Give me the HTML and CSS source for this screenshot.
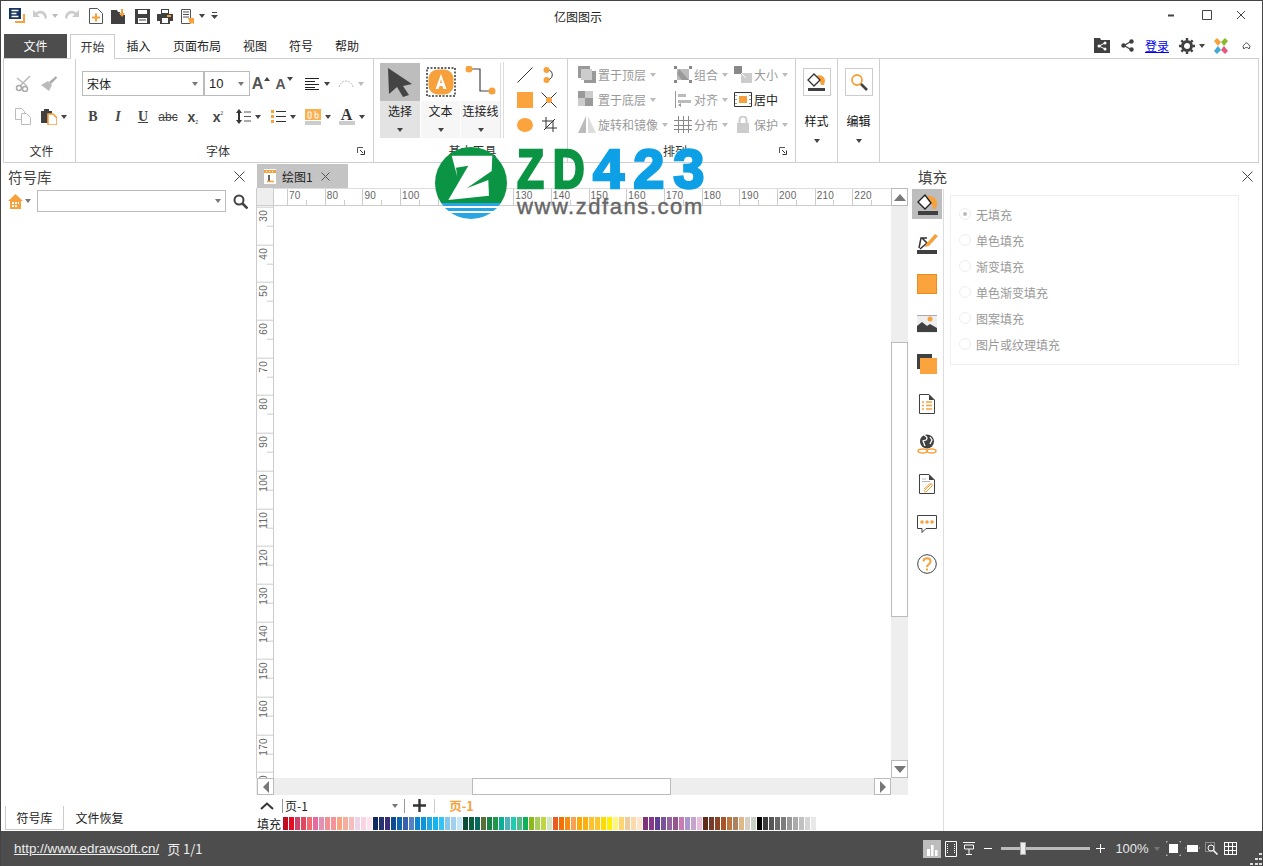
FILE: index.html
```html
<!DOCTYPE html>
<html lang="zh">
<head>
<meta charset="utf-8">
<title>亿图图示</title>
<link rel="stylesheet" href="styles.css">
</head>
<body>
<div class="app">
  <header class="titlebar">
    <div class="qat">
      <svg width="16" height="16" viewBox="0 0 16 16"><rect y="0" width="12" height="11" fill="#17365f"/><path d="M2.500 2.500h7M2.500 5.500h5M2.500 8.500h7" stroke="#fff" stroke-width="1.300"/><path d="M6 14h9V6" fill="none" stroke="#f7a13d" stroke-width="2"/></svg>
      <svg width="16" height="14" viewBox="0 0 16 14"><path d="M1 1v7h7L5.500 5.500C8 3.500 12 4.500 13 10l2-1C15 3 9-.5 4 3.500L1 1z" fill="#ccc"/></svg>
      <i class="caret dim"></i>
      <svg width="16" height="14" viewBox="0 0 16 14"><path d="M15 1v7H8l2.500-2.500C8 3.500 4 4.500 3 10L1 9C1 3 7-.5 12 3.500L15 1z" fill="#ccc"/></svg>
      <svg width="14" height="16" viewBox="0 0 14 16"><path d="M.500.500h8l5 5v10H.500z" fill="#fff" stroke="#555"/><path d="M7 5.500v8M3 9.500h8" stroke="#f7a13d" stroke-width="2"/></svg>
      <svg width="16" height="15" viewBox="0 0 16 15"><path d="M0 1h6l1 2h2v3h5v9H0z" fill="#404040"/><path d="M10 0h2v4h2l-3 4-3-4h2z" fill="#f7a13d"/></svg>
      <svg width="15" height="15" viewBox="0 0 15 15"><path d="M0 0h15v15H0z" fill="#404040"/><path d="M3 1h9v4H3zM3 9h9v5H3z" fill="#fff"/><path d="M4 11h7" stroke="#404040"/></svg>
      <svg width="16" height="15" viewBox="0 0 16 15"><path d="M4 0h8v5H4zM0 5h16v7h-3v3H3v-3H0z" fill="#404040"/><path d="M5 1h6v3H5zM5 9h6v5H5z" fill="#fff"/><path d="M10 6h4v2h-4z" fill="#f7a13d"/></svg>
      <svg width="14" height="15" viewBox="0 0 14 15"><path d="M.500.500h9v14h-9z" fill="#fff" stroke="#555"/><path d="M2 3h6M2 5.500h6M2 8h6" stroke="#555"/><path d="M7 9h6v6l-2-1-2 1z" fill="#f7a13d"/></svg>
      <i class="caret"></i>
      <svg width="7" height="8" viewBox="0 0 7 8"><path d="M1 .500h5" stroke="#444"/><path d="M0 3h7L3.500 7z" fill="#444"/></svg>
    </div>
    <h1 class="apptitle">亿图图示</h1>
    <div class="winctl">
      <svg width="8" height="3" viewBox="0 0 8 3"><path d="M1 1.500h6" stroke="#444" stroke-width="2"/></svg>
      <svg width="10" height="10" viewBox="0 0 10 10"><path d="M.500.500h9v9h-9z" fill="none" stroke="#444"/></svg>
      <svg width="10" height="10" viewBox="0 0 10 10"><path d="M1 1l8 8M9 1l-8 8" stroke="#444"/></svg>
    </div>
  </header>

  <nav class="tabbar">
    <div class="filebtn">文件</div>
    <div class="tabs">
      <span class="tab active">开始</span>
      <span class="tab t47">插入</span>
      <span class="tab t70">页面布局</span>
      <span class="tab t46">视图</span>
      <span class="tab t46">符号</span>
      <span class="tab t46">帮助</span>
    </div>
    <div class="tabtools">
      <svg width="16" height="15" viewBox="0 0 16 15"><path d="M0 0h6l1 2h9v13H0z" fill="#404040"/><path d="M11 5L5 8l6 3" fill="none" stroke="#fff"/><circle cx="5" cy="8" r="1.500" fill="#fff"/><circle cx="11" cy="5" r="1.500" fill="#fff"/><circle cx="11" cy="11" r="1.500" fill="#fff"/></svg>
      <svg width="13" height="13" viewBox="0 0 13 13"><path d="M10 2.500L3 6.500l7 4" fill="none" stroke="#404040" stroke-width="1.300"/><circle cx="10.500" cy="2.500" r="2.200" fill="#404040"/><circle cx="2.500" cy="6.500" r="2.200" fill="#404040"/><circle cx="10.500" cy="10.500" r="2.200" fill="#404040"/></svg>
      <a class="login">登录</a>
      <span class="combo"><svg width="16" height="16" viewBox="0 0 16 16"><circle cx="8" cy="8" r="4.500" fill="none" stroke="#404040" stroke-width="3"/><path d="M8 0v16M0 8h16M2.300 2.300l11.400 11.400M13.700 2.300L2.300 13.700" stroke="#404040" stroke-width="2.400" stroke-dasharray="2.500 11 2.500"/></svg><i class="caret"></i></span>
      <svg width="16" height="16" viewBox="0 0 16 16"><path d="M1 3l3-3 4 4-3 4z" fill="#f7a13d"/><path d="M15 3l-3-3-4 4 3 4z" fill="#8cb82b"/><path d="M1 13l3 3 4-4-3-4z" fill="#3fa9dc"/><path d="M15 13l-3 3-4-4 3-4z" fill="#e8557f"/></svg>
      <svg width="9" height="8" viewBox="0 0 9 8"><path d="M1 4.500C2 3 3 1 4.500 1S7 3 8 4.500L7 7C6 5 3 5 2 7z" fill="none" stroke="#444"/></svg>
    </div>
  </nav>

  <section class="ribbon">
    <div class="group g-file">
      <div class="rows">
        <div class="row r-file1">
          <svg width="17" height="17" viewBox="0 0 17 17"><path d="M15 1L5 11M2 3l10 8" stroke="#bbb" stroke-width="1.600"/><circle cx="4" cy="13" r="2.500" fill="#fff" stroke="#aaa" stroke-width="1.500"/><circle cx="10" cy="14" r="2.500" fill="#fff" stroke="#aaa" stroke-width="1.500"/></svg>
          <svg width="16" height="16" viewBox="0 0 16 16"><path d="M15 0l1 2-6 6-2-2z" fill="#aaa"/><path d="M7 5l4 4-3 6-8-6z" fill="#bbb"/></svg>
        </div>
        <div class="row r-file2">
          <svg width="17" height="17" viewBox="0 0 17 17"><path d="M.500.500h6l3 3v8h-9z" fill="#fff" stroke="#bbb"/><path d="M6.500 5.500h5l4 4v7h-9z" fill="#fff" stroke="#bbb"/></svg>
          <span class="combo"><svg width="16" height="16" viewBox="0 0 16 16"><path d="M0 2h3V0h5v2h3v3H7v9H0z" fill="#404040"/><path d="M7 5h5l4 4v7H7z" fill="#fff" stroke="#f7a13d" stroke-width="1.600"/></svg><i class="caret"></i></span>
        </div>
      </div>
      <div class="glabel">文件</div>
    </div>

    <div class="group g-font">
      <div class="rows">
        <div class="row r-font1">
          <div class="select s-font"><span>宋体</span><i class="caret grey"></i></div>
          <div class="select s-size"><span class="lat">10</span><i class="caret grey"></i></div>
          <span class="fontgrow">A<i class="caret up"></i></span>
          <span class="fontgrow small">A<i class="caret"></i></span>
          <span class="combo"><svg width="15" height="12" viewBox="0 0 15 12"><path d="M0 .500h14M0 3.500h10M0 6.500h14M0 9.500h10M0 11.500h14" stroke="#222"/></svg><i class="caret"></i></span>
          <span class="combo"><svg width="16" height="11" viewBox="0 0 16 11"><path d="M1 9C3 1 13 1 15 9" fill="none" stroke="#bbb" stroke-dasharray="2 1"/></svg><i class="caret dim"></i></span>
        </div>
        <div class="row r-font2">
          <b class="fmt serif">B</b>
          <i class="fmt serif ital">I</i>
          <u class="fmt serif">U</u>
          <s class="fmt abc">abc</s>
          <span class="fmt xs">x<sub>₂</sub></span>
          <span class="fmt xs">x<sub class="up2">²</sub></span>
          <span class="combo"><svg width="15" height="15" viewBox="0 0 15 15"><path d="M3 0l3 4H4v7h2l-3 4-3-4h2V4H0z" fill="#333"/><path d="M8 3h7M8 7.500h7M8 12h7" stroke="#555"/></svg><i class="caret"></i></span>
          <span class="combo"><svg width="15" height="13" viewBox="0 0 15 13"><path d="M0 0h3v3H0zM0 5h3v3H0zM0 10h3v3H0z" fill="#f7a13d"/><path d="M5 1.500h10M5 6.500h10M5 11.500h10" stroke="#333"/></svg><i class="caret"></i></span>
          <span class="combo"><svg width="16" height="16" viewBox="0 0 16 16"><path d="M0 0h16v11H0z" fill="#fbb04f"/><path d="M0 12h16v4H0z" fill="#ccc"/><path d="M3 3h3v6H3zM10 2v7h3V5h-3" fill="none" stroke="#fff"/></svg><i class="caret"></i></span>
          <span class="combo"><span class="fontcolor">A</span><i class="caret"></i></span>
        </div>
      </div>
      <div class="glabel launch">
        <span></span><span>字体</span>
        <svg class="launcher" width="8" height="8" viewBox="0 0 8 8"><path d="M.500 6V.500H6" fill="none" stroke="#555"/><path d="M3 3l3 3M7.500 3.500v4h-4" fill="none" stroke="#333"/></svg>
      </div>
    </div>

    <div class="group g-tools">
      <div class="toolsrow">
        <div class="bigs">
          <div class="big on">
            <div class="bigicon"><svg width="26" height="30" viewBox="0 0 26 30"><path d="M1 1l24 16-9 2 6 9-6 2-6-10-8 7z" fill="#444"/></svg></div>
            <div class="bigfoot">选择<i class="caret"></i></div>
          </div>
          <div class="big">
            <div class="bigicon"><svg width="30" height="30" viewBox="0 0 30 30"><rect x="1" y="1" width="28" height="28" fill="#fff" stroke="#333" stroke-width="1.500" stroke-dasharray="2 1.500"/><rect x="2.500" y="2.500" width="25" height="25" rx="9" fill="#f7a13d"/><path d="M15 7l-5.500 15h3l1-3h3l1 3h3z M15 12l1 4h-2z" fill="#fff" fill-rule="evenodd"/></svg></div>
            <div class="bigfoot">文本<i class="caret"></i></div>
          </div>
          <div class="big">
            <div class="bigicon"><svg width="32" height="32" viewBox="0 0 32 32"><path d="M4 3h11v22h12" fill="none" stroke="#444" stroke-width="1.200"/><circle cx="4" cy="3" r="3.500" fill="#f7a13d"/><circle cx="27" cy="25" r="3.500" fill="#f7a13d"/></svg></div>
            <div class="bigfoot">连接线<i class="caret"></i></div>
          </div>
        </div>
        <div class="shapes">
          <svg width="16" height="16" viewBox="0 0 16 16"><path d="M.500 15.500l15-15" stroke="#333"/></svg>
          <svg width="12" height="16" viewBox="0 0 12 16"><path d="M4 3c6-1 8 9 0 10" fill="none" stroke="#333"/><circle cx="3.500" cy="3" r="3" fill="#f7a13d"/><circle cx="3.500" cy="13" r="3" fill="#f7a13d"/></svg>
          <svg width="16" height="16" viewBox="0 0 16 16"><rect width="16" height="16" fill="#fba33d"/></svg>
          <svg width="16" height="16" viewBox="0 0 16 16"><path d="M.500.500l15 15M15.500.500l-15 15" stroke="#333"/><circle cx="8" cy="8" r="3" fill="#f7a13d"/></svg>
          <svg width="16" height="16" viewBox="0 0 16 16"><ellipse cx="8" cy="8" rx="8" ry="7" fill="#fba33d"/></svg>
          <svg width="15" height="15" viewBox="0 0 15 15"><path d="M4 0v11h11M0 4h11v11M2 13L13 2" fill="none" stroke="#333"/></svg>
        </div>
      </div>
      <div class="glabel">基本工具</div>
    </div>

    <div class="group g-arr">
      <div class="arrange">
        <div class="ai"><svg width="18" height="17" viewBox="0 0 18 17"><path d="M0 0h12v12H0z" fill="#999"/><path d="M6 5h12v12H6z" fill="#999"/><path d="M3 3h11v11H3z" fill="#ccc"/></svg><span>置于顶层</span><i class="caret dim"></i></div>
        <div class="ai"><svg width="18" height="17" viewBox="0 0 18 17"><path d="M3 3h12v11H3z" fill="#bbb"/><path d="M0 0h3v3H0zM15 0h3v3h-3zM0 14h3v3H0zM15 14h3v3h-3z" fill="#888"/><path d="M5 3l10 11H8L3 8z" fill="#999"/></svg><span>组合</span><i class="caret dim"></i></div>
        <div class="ai"><svg width="18" height="17" viewBox="0 0 18 17"><path d="M0 0h8v8H0z" fill="#888"/><path d="M7 7h11v10H7z" fill="#ccc"/><path d="M7 7l5 5" stroke="#fff"/></svg><span>大小</span><i class="caret dim"></i></div>
        <div class="ai"><svg width="18" height="17" viewBox="0 0 18 17"><path d="M0 0h7v7H0zM7 7h8v8H7z" fill="#999"/><path d="M7 0h8v7H7zM0 7h7v8H0z" fill="#ccc"/></svg><span>置于底层</span><i class="caret dim"></i></div>
        <div class="ai"><svg width="18" height="17" viewBox="0 0 18 17"><path d="M1.500 0v17" stroke="#999"/><path d="M4 3h8v3H4zM4 9h13v3H4z" fill="#bbb"/><path d="M4 14l3-2v4z" fill="#999"/></svg><span>对齐</span><i class="caret dim"></i></div>
        <div class="ai on"><svg width="18" height="15" viewBox="0 0 18 15"><path d="M.500.500h17v14H.500z" fill="#fff" stroke="#333"/><path d="M5 4h8v7H5z" fill="#f7a13d"/><path d="M2 3v1M2 7v1M2 11v1M16 3v1M16 7v1M16 11v1" stroke="#333"/></svg><span>居中</span></div>
        <div class="ai"><svg width="18" height="17" viewBox="0 0 18 17"><path d="M8 0v17L0 17z" fill="#bbb"/><path d="M10 0v17h8z" fill="#ddd"/></svg><span>旋转和镜像</span><i class="caret dim"></i></div>
        <div class="ai"><svg width="18" height="17" viewBox="0 0 18 17"><path d="M4.500 0v17M9.500 0v17M14.500 0v17M0 4.500h18M0 9.500h18M0 13.500h18" stroke="#888"/></svg><span>分布</span><i class="caret dim"></i></div>
        <div class="ai"><svg width="18" height="17" viewBox="0 0 18 17"><path d="M5.500 7V4a3.500 3.500 0 017 0v3" fill="none" stroke="#ccc" stroke-width="2"/><path d="M3 7h12v10H3z" fill="#ccc"/></svg><span>保护</span><i class="caret dim"></i></div>
      </div>
      <div class="glabel launch">
        <span></span><span>排列</span>
        <svg class="launcher" width="8" height="8" viewBox="0 0 8 8"><path d="M.500 6V.500H6" fill="none" stroke="#555"/><path d="M3 3l3 3M7.500 3.500v4h-4" fill="none" stroke="#333"/></svg>
      </div>
    </div>

    <div class="group g-one">
      <div class="onebox"><svg width="19" height="18" viewBox="0 0 19 18"><path d="M9 3c4-2 9 0 9 5l-1 4h-3l-1-3z" fill="#f7a13d"/><path d="M7 1L1 7l6 6 6-6z" fill="#fff" stroke="#333" stroke-width="1.300"/><path d="M1 15h17v3H1z" fill="#404040"/></svg></div>
      <div class="onetext">样式</div>
      <i class="caret"></i>
    </div>
    <div class="group g-one">
      <div class="onebox"><svg width="18" height="18" viewBox="0 0 18 18"><circle cx="7" cy="7" r="5" fill="none" stroke="#f7a13d" stroke-width="1.800"/><path d="M11 11l6 6" stroke="#444" stroke-width="2.600"/></svg></div>
      <div class="onetext">编辑</div>
      <i class="caret"></i>
    </div>
  </section>

  <main class="main">
    <aside class="leftpanel">
      <div class="phead"><span>符号库</span><svg width="11" height="11" viewBox="0 0 11 11"><path d="M.500.500l10 10M10.500.500l-10 10" stroke="#444"/></svg></div>
      <div class="search">
        <svg width="15" height="15" viewBox="0 0 15 15"><path d="M7.500 0L15 7h-2v8H2V7H0z" fill="#f7a13d"/><path d="M4 8h2v2H4zM7 8h2v2H7zM10 8h1v2h-1zM4 11h2v2H4zM7 11h2v2H7z" fill="#fff"/></svg>
        <i class="caret grey"></i>
        <div class="searchbox"><i class="caret grey"></i></div>
        <svg width="15" height="15" viewBox="0 0 15 15"><circle cx="6" cy="6" r="4.500" fill="none" stroke="#444" stroke-width="2"/><path d="M9.500 9.500l5 5" stroke="#444" stroke-width="2.600"/></svg>
      </div>
      <div class="lefttabs">
        <span class="ltab active">符号库</span>
        <span class="ltab">文件恢复</span>
      </div>
    </aside>

    <section class="center">
      <div class="doctabs">
        <div class="doctab">
          <svg width="12" height="15" viewBox="0 0 12 15"><path d="M0 0h12v15H0z" fill="#fff"/><path d="M0 1h12v3H0z" fill="#f7a13d"/><path d="M2 2.500h1M5 2.500h1M8 2.500h1" stroke="#fff"/><path d="M5 6v6" stroke="#333" stroke-width="1.500"/><path d="M3 12.500h7" stroke="#f7a13d" stroke-width="1.500"/></svg>
          <span>绘图1</span>
          <svg width="9" height="9" viewBox="0 0 9 9"><path d="M.500.500l8 8M8.500.500l-8 8" stroke="#555"/></svg>
        </div>
      </div>
      <div class="canvasgrid">
        <div class="corner"></div>
        <div class="hruler">
          <span>70</span><span>80</span><span>90</span><span>100</span><span>110</span><span>120</span><span>130</span><span>140</span><span>150</span><span>160</span><span>170</span><span>180</span><span>190</span><span>200</span><span>210</span><span>220</span>
        </div>
        <div class="vscroll">
          <div class="sbtn"><i class="caret up big7"></i></div>
          <div class="vthumb"></div>
          <div class="sbtn end"><i class="caret big7d"></i></div>
        </div>
        <div class="vruler">
          <span>30</span><span>40</span><span>50</span><span>60</span><span>70</span><span>80</span><span>90</span><span>100</span><span>110</span><span>120</span><span>130</span><span>140</span><span>150</span><span>160</span><span>170</span><span>180</span>
        </div>
        <div class="paper"></div>
        <div class="hscroll">
          <div class="sbtn"><i class="tri-l"></i></div>
          <div class="hthumb"></div>
          <div class="sbtn end"><i class="tri-r"></i></div>
        </div>
      </div>
      <div class="pagebar">
        <svg class="chev" width="14" height="8" viewBox="0 0 14 8"><path d="M1 7l6-5.500L13 7" fill="none" stroke="#333" stroke-width="2"/></svg>
        <div class="pagesel"><span>页-1</span><i class="caret grey"></i></div>
        <svg width="13" height="13" viewBox="0 0 13 13"><path d="M6.500 0v13M0 6.500h13" stroke="#333" stroke-width="2.400"/></svg>
        <div class="pagetab">页-1</div>
      </div>
      <div class="swatchrow">
        <span class="fillname">填充</span>
        <div class="swatches">
          <i style="background:#c00d23"></i><i style="background:#e60c26"></i><i style="background:#c8466b"></i><i style="background:#e0485f"></i><i style="background:#f36a6f"></i><i style="background:#e76a9e"></i><i style="background:#e290b4"></i><i style="background:#f48d8f"></i><i style="background:#f5939c"></i><i style="background:#fba27f"></i><i style="background:#f5ae9e"></i><i style="background:#f6bdb9"></i><i style="background:#ecd5e8"></i><i style="background:#fad2e0"></i><i style="background:#fde4ec"></i>
          <i style="background:#0e2a5e"></i><i style="background:#26326f"></i><i style="background:#3a2e7b"></i><i style="background:#0d4c92"></i><i style="background:#0e66ab"></i><i style="background:#3a60ab"></i><i style="background:#5482c2"></i><i style="background:#0c85d0"></i><i style="background:#0e94d8"></i><i style="background:#22a8e0"></i><i style="background:#12b5ee"></i><i style="background:#35c2f6"></i><i style="background:#88c6ec"></i><i style="background:#9fd0ef"></i><i style="background:#c5e6f6"></i>
          <i style="background:#094d35"></i><i style="background:#0a5f3e"></i><i style="background:#056b60"></i><i style="background:#596f34"></i><i style="background:#158348"></i><i style="background:#23964a"></i><i style="background:#0bae96"></i><i style="background:#4fb2b7"></i><i style="background:#20cbb2"></i><i style="background:#4fbd87"></i><i style="background:#0db15c"></i><i style="background:#8bb81a"></i><i style="background:#a8cf5c"></i><i style="background:#bfd640"></i><i style="background:#d0e3c4"></i>
          <i style="background:#ec5a22"></i><i style="background:#f37004"></i><i style="background:#f58b12"></i><i style="background:#f9a152"></i><i style="background:#fbab09"></i><i style="background:#fcb010"></i><i style="background:#fdc02f"></i><i style="background:#fdc62e"></i><i style="background:#ffda00"></i><i style="background:#ffef00"></i><i style="background:#fff57e"></i><i style="background:#ffd56e"></i><i style="background:#eecb9a"></i><i style="background:#fdd9aa"></i><i style="background:#fde6cb"></i>
          <i style="background:#7e3277"></i><i style="background:#84398a"></i><i style="background:#5f3f96"></i><i style="background:#7a539b"></i><i style="background:#96639f"></i><i style="background:#95558f"></i><i style="background:#c97bb2"></i><i style="background:#ab97cf"></i><i style="background:#c5a3cc"></i><i style="background:#ecbcdc"></i>
          <i style="background:#5f2c18"></i><i style="background:#743b2a"></i><i style="background:#8a4427"></i><i style="background:#a9552a"></i><i style="background:#bd7740"></i><i style="background:#ad8260"></i><i style="background:#deb887"></i><i style="background:#d6cfc6"></i><i style="background:#c8d1c6"></i>
          <i style="background:#000"></i><i style="background:#3b3b3b"></i><i style="background:#555"></i><i style="background:#696969"></i><i style="background:#7c7c7c"></i><i style="background:#999"></i><i style="background:#aaa"></i><i style="background:#c0c0c0"></i><i style="background:#d5d5d5"></i><i style="background:#e8e8e8"></i>
        </div>
      </div>
    </section>

    <aside class="rightpanel">
      <div class="phead rhead"><span>填充</span><svg width="11" height="11" viewBox="0 0 11 11"><path d="M.500.500l10 10M10.500.500l-10 10" stroke="#444"/></svg></div>
      <div class="rightbody">
        <div class="iconcol">
          <div class="sideicon on"><svg width="22" height="22" viewBox="0 0 22 22"><path d="M11 3c5-1 11 3 10 8l-1 5h-3l-1-4z" fill="#f7a13d"/><path d="M9 2L2 9l7 7 6-6z" fill="#fff" stroke="#222" stroke-width="1.400"/><path d="M2 18h20v4H2z" fill="#404040"/></svg></div>
          <div class="sideicon"><svg width="22" height="22" viewBox="0 0 22 22"><path d="M3 15L5 5h6L6 5l5 5-7 6" fill="none" stroke="#333" stroke-width="1.500"/><path d="M19 1l3 2-9 10-4 1 1-3z" fill="#f7a13d"/><path d="M1 17h20v4H1z" fill="#404040"/></svg></div>
          <div class="sideicon"><svg width="20" height="20" viewBox="0 0 20 20"><rect x=".5" y=".5" width="19" height="19" fill="#fba33d" stroke="#f08a1a"/></svg></div>
          <div class="sideicon"><svg width="20" height="18" viewBox="0 0 20 18"><path d="M0 0h20v18H0z" fill="#eee"/><path d="M0 0h20v1H0z" fill="#aaa"/><circle cx="13" cy="4" r="2.500" fill="#f7a13d"/><path d="M0 11l5-4 5 4 3-2 7 4v4H0z" fill="#404040"/></svg></div>
          <div class="sideicon"><svg width="20" height="20" viewBox="0 0 20 20"><path d="M0 0h15v15H0z" fill="#404040"/><path d="M3 4h17v16H3z" fill="#fba33d"/></svg></div>
          <div class="sideicon"><svg width="16" height="20" viewBox="0 0 16 20"><path d="M.500.500H10L15.500 6v13.500H.500z" fill="#fff" stroke="#404040"/><path d="M10 .500L15.500 6H10z" fill="#404040"/><path d="M3 8h2M3 11.500h2M3 15h2M7 8h6M7 11.500h6M7 15h6" stroke="#f7a13d" stroke-width="1.500"/></svg></div>
          <div class="sideicon"><svg width="20" height="20" viewBox="0 0 20 20"><circle cx="10" cy="7.500" r="7" fill="#404040"/><path d="M7 1c3 2 4 3 2 5L6 7l2 5M13 3l2 3-2 4" fill="none" stroke="#fff" stroke-width="1.300"/><ellipse cx="5.500" cy="17" rx="4.500" ry="2" fill="none" stroke="#f7a13d" stroke-width="1.500"/><ellipse cx="14.500" cy="17" rx="4.500" ry="2" fill="none" stroke="#f7a13d" stroke-width="1.500"/></svg></div>
          <div class="sideicon"><svg width="16" height="20" viewBox="0 0 16 20"><path d="M.500.500H10L15.500 6v13.500H.500z" fill="#fff" stroke="#404040"/><path d="M10 .500L15.500 6H10z" fill="#404040"/><path d="M3 5h4M3 7.500h8" stroke="#bbb"/><path d="M12 10l-6 6c-2 1 0 3 1.500 1.500L13 12c1-2-1-3-2.500-2L5 15" fill="none" stroke="#f7a13d"/></svg></div>
          <div class="sideicon"><svg width="20" height="19" viewBox="0 0 20 19"><path d="M.500.500h19v13H9l-4 4v-4H.500z" fill="#fff" stroke="#404040"/><circle cx="5" cy="7" r="1.800" fill="#f7a13d"/><circle cx="10" cy="7" r="1.800" fill="#f7a13d"/><circle cx="15" cy="7" r="1.800" fill="#f7a13d"/></svg></div>
          <div class="sideicon"><svg width="20" height="20" viewBox="0 0 20 20"><circle cx="10" cy="10" r="9.300" fill="#fff" stroke="#404040"/><path d="M6.500 7.500c0-4.500 7-4.500 7 0 0 3-3.500 3-3.500 5.500" fill="none" stroke="#f7a13d" stroke-width="2"/><path d="M9 14.500h2v2H9z" fill="#f7a13d"/></svg></div>
        </div>
        <div class="fillbox">
          <label class="fillopt"><i class="radio on"></i>无填充</label>
          <label class="fillopt"><i class="radio"></i>单色填充</label>
          <label class="fillopt"><i class="radio"></i>渐变填充</label>
          <label class="fillopt"><i class="radio"></i>单色渐变填充</label>
          <label class="fillopt"><i class="radio"></i>图案填充</label>
          <label class="fillopt"><i class="radio"></i>图片或纹理填充</label>
        </div>
      </div>
    </aside>
  </main>

  <footer class="status">
    <a class="stlink">http://www.edrawsoft.cn/</a>
    <span class="stpage">页 1/1</span>
    <div class="sttools">
      <span class="stactive"><svg width="12" height="14" viewBox="0 0 12 14"><path d="M1 7h3v7H1zM5 3h2.500v11H5zM9 8h2.500v6H9z" fill="#fff"/></svg></span>
      <svg width="12" height="16" viewBox="0 0 12 16"><path d="M.500.500h11v15H.500z" fill="none" stroke="#fff"/><path d="M2.500 3v10M9.500 3v10" stroke="#fff" stroke-dasharray="1 1"/></svg>
      <svg width="12" height="13" viewBox="0 0 12 13"><path d="M0 .500h12M1.500 3h9v4h-9zM6 7v5M3 12.500h6" fill="none" stroke="#fff"/></svg>
      <svg width="8" height="1" viewBox="0 0 8 1"><path d="M0 .5h8" stroke="#fff"/></svg>
      <div class="slider"><i></i></div>
      <svg width="9" height="9" viewBox="0 0 9 9"><path d="M4.500 0v9M0 4.500h9" stroke="#fff"/></svg>
      <span class="zoomval">100%</span>
      <i class="caret dim2"></i>
      <svg width="15" height="15" viewBox="0 0 15 15"><path d="M3 3h9v9H3z" fill="#fff"/><path d="M0 0h2M13 0h2M0 15h2M13 15h2M0 0v2M15 0v2M0 13v2M15 13v2" stroke="#ccc"/></svg>
      <svg width="15" height="9" viewBox="0 0 15 9"><path d="M2 1h11v7H2z" fill="#fff"/><path d="M0 4h1M14 4h1" stroke="#ccc"/></svg>
      <svg width="13" height="13" viewBox="0 0 13 13"><path d="M.500.500h9v9h-9z" fill="none" stroke="#ccc" stroke-dasharray="1 1"/><circle cx="6" cy="6" r="3" fill="none" stroke="#fff"/><path d="M8.500 8.500l4 4" stroke="#fff" stroke-width="1.500"/></svg>
      <svg width="13" height="13" viewBox="0 0 13 13"><path d="M.500 0v13M4.500 0v13M8.500 0v13M12.500 0v13M0 .500h13M0 4.500h13M0 8.500h13M0 12.500h13" stroke="#fff"/></svg>
      <svg class="grip" width="12" height="12" viewBox="0 0 12 12"><path d="M9 0h3v2H9zM5 5h3v2H5zM9 5h3v2H9zM0 10h3v2H0zM5 10h3v2H5zM9 10h3v2H9z" fill="#ddd"/></svg>
    </div>
  </footer>

  <div class="watermark">
    <svg width="72" height="72" viewBox="0 0 72 72">
      <defs><clipPath id="disc"><circle cx="36" cy="36" r="36"/></clipPath></defs>
      <g clip-path="url(#disc)">
        <rect width="72" height="56" fill="#0b9444"/>
        <rect y="56" width="72" height="16" fill="#fff"/>
        <path d="M0 56h72v3H0zM0 61h72v3H0zM0 66h72v6H0z" fill="#29a5e3"/>
        <path d="M16.700 8.700L57.300 8.700 56.700 24 31.700 41.300 53.300 33 54 48.700 13.300 53 33.300 18.700 21 20.700 22.300 29.700z" fill="#fff"/>
      </g>
    </svg>
    <div class="wmtext">
      <div class="wmbig"><span class="g">ZD</span><span class="b">423</span></div>
      <div class="wmurl">www.zdfans.com</div>
    </div>
  </div>
</div>
</body>
</html>
```

FILE: styles.css
```css
* { box-sizing: border-box; }
html, body { margin: 0; padding: 0; }
body {
  font-family: "Noto Sans CJK SC", "Liberation Sans", sans-serif;
  font-size: 12px;
  color: #333;
  background: #fff;
  overflow: hidden;
}
i { font-style: normal; }

.app {
  position: relative;
  width: 1263px;
  height: 866px;
  display: flex;
  flex-direction: column;
  border: 1px solid #444;
  border-bottom: 0;
  overflow: hidden;
}

/* carets */
.caret {
  display: block;
  width: 0; height: 0;
  border-left: 3.5px solid transparent;
  border-right: 3.5px solid transparent;
  border-top: 4px solid #444;
}
.caret.up { border-top: 0; border-bottom: 4px solid #444; }
.caret.big7 { border-left-width: 6px; border-right-width: 6px; border-bottom: 7px solid #777; }
.caret.big7d { border-left-width: 6px; border-right-width: 6px; border-top: 7px solid #777; }
.caret.dim { border-top-color: #bbb; }
.caret.dim2 { border-top-color: #777; }
.caret.grey { border-top-color: #777; }
.combo { display: flex; align-items: center; gap: 4px; }

/* title bar */
.titlebar { height: 32px; flex: none; display: flex; align-items: center; position: relative; }
.qat {
  display: grid;
  grid-template-columns: 20px 26px 4px 30px 18px 28px 18px 28px 18px 10px 14px;
  justify-items: center;
  align-items: center;
  padding: 0 0 2px 6px;
  width: 553px;
}
.apptitle { margin: 0; font-size: 12px; font-weight: 400; width: 48px; color: #222; line-height: 32px; white-space: nowrap; }
.winctl {
  margin-left: auto;
  display: grid;
  grid-template-columns: 35px 38px 30px;
  justify-items: center;
  align-items: center;
  padding: 0 6px 4px 0;
}

/* tabs */
.tabbar { height: 25px; flex: none; display: flex; padding-right: 2px; position: relative; z-index: 1; }
.filebtn {
  width: 63px; height: 24px; margin: 1px 0 0 3px;
  background: #4d4d4d; color: #fff;
  text-align: center; line-height: 24px;
}
.tabs { display: flex; margin-left: 3px; padding-top: 1px; }
.tab { width: 46px; text-align: center; line-height: 24px; color: #222; }
.tab.t47 { width: 47px; }
.tab.t70 { width: 70px; }
.tab.active { width: 45px; height: 25px; border: 1px solid #ccc; border-bottom: 0; background: #fff; color: #333; line-height: 23px; }
.tabtools {
  margin-left: auto;
  display: grid;
  grid-template-columns: 24px 26px 34px 36px 22px 28px;
  justify-items: center;
  align-items: center;
}
.login { color: #0000ee; text-decoration: underline; }

/* ribbon */
.ribbon {
  height: 105px; flex: none;
  margin: 0 3px 0 2px;
  display: flex;
  border: 1px solid #d0d0d0;
}
.group { display: flex; flex-direction: column; border-right: 1px solid #d0d0d0; flex: none; }
.g-file { width: 72px; }
.g-font { width: 298px; }
.g-tools { width: 194px; }
.g-arr { width: 228px; }
.g-one { width: 42px; align-items: center; padding-top: 9px; }
.rows { padding-top: 8px; }
.row { height: 33px; display: grid; justify-items: center; align-items: center; }
.r-file1 { grid-template-columns: 38px 14px; }
.r-file2 { grid-template-columns: 38px 24px; }
.r-font1 { grid-template-columns: 122px 46px 22px 24px 43px 23px; padding-left: 6px; }
.r-font2 { grid-template-columns: 24px 26px 24px 26px 24px 26px 35px 35px 34px 33px; padding-left: 5px; }
.glabel { margin-top: auto; height: 22px; text-align: center; line-height: 22px; color: #333; padding-left: 4px; }
.glabel.launch { display: grid; grid-template-columns: 1fr auto 1fr; padding: 0 13px 0 0; align-items: center; }
.launcher { justify-self: end; margin-right: -5px; }

.select {
  width: 100%; height: 25px;
  border: 1px solid #bbb;
  display: flex; align-items: center; justify-content: space-between;
  padding: 0 5px 0 4px;
  color: #222;
}
.s-font { width: 122px; }
.s-size { width: 46px; }
.lat { font-family: "Liberation Sans", sans-serif; font-size: 13px; }
.fontgrow {
  font: 700 16px "Liberation Sans", sans-serif;
  color: #555;
  display: flex; align-items: flex-start; gap: 1px;
  line-height: 16px;
}
.fontgrow.small { font-size: 14px; }
.fontgrow .caret { margin-top: 1px; }
.fmt { color: #444; line-height: 16px; text-align: center; }
.serif { font: 700 14px "Liberation Serif", serif; }
.ital { font-style: italic; }
.abc { font: 12px "Liberation Sans", sans-serif; }
.xs { font: 700 14px "Liberation Sans", sans-serif; }
.xs sub { font-size: 8px; vertical-align: -1px; font-weight: 400; }
.xs sub.up2 { vertical-align: 5px; }
.fontcolor {
  font: 700 16px "Liberation Serif", serif;
  color: #333; width: 16px; height: 17px;
  text-align: center; line-height: 13px;
  border-bottom: 4px solid #ccc;
}

.toolsrow { display: flex; padding: 3px 0 0 6px; }
.bigs { display: flex; gap: 1px; height: 75px; margin-top: 1px; border-right: 1px solid #ddd; }
.big { width: 39px; display: flex; flex-direction: column; align-items: center; background: #fff; }
.big:first-child { width: 40px; }
.bigicon { height: 38px; width: 100%; display: flex; align-items: center; justify-content: center; }
.bigfoot {
  flex: 1; width: 100%;
  background: #f6f6f6;
  display: flex; flex-direction: column; align-items: center;
  padding-top: 1px; gap: 9px;
  line-height: 17px; color: #222;
}
.big.on .bigicon { background: #bdbdbd; }
.big.on .bigfoot { background: #e3e3e3; }
.shapes {
  display: grid;
  grid-template-columns: 24px 24px;
  grid-auto-rows: 25px;
  justify-items: center; align-items: center;
  margin-left: 2px;
  padding-left: 9px;
  border-left: 1px solid #ddd;
}
.arrange {
  display: grid;
  grid-template-columns: 96px 60px 62px;
  grid-auto-rows: 25px;
  padding: 0 0 0 9px;
  margin-top: 3px;
  color: #999;
}
.ai { display: flex; align-items: center; gap: 1px; white-space: nowrap; }
.ai svg { width: 20px; flex: none; }
.ai .caret { margin-left: 3px; }
.ai.on { color: #222; }
.onebox { width: 28px; height: 28px; border: 1px solid #ccc; display: flex; align-items: center; justify-content: center; }
.onetext { margin-top: 16px; line-height: 18px; color: #111; margin-bottom: 9px; }

/* main */
.main { height: 668px; flex: none; display: flex; }
.leftpanel { width: 255px; flex: none; display: flex; flex-direction: column; }
.phead { height: 26px; display: flex; align-items: center; justify-content: space-between; padding: 0 11px 0 7px; font-size: 14.500px; color: #444; flex: none; }
.search { display: flex; align-items: center; padding-left: 7px; height: 24px; }
.search .caret { margin-left: 2px; }
.searchbox {
  width: 189px; height: 22px; margin: 0 7px 0 6px;
  border: 1px solid #bbb;
  display: flex; align-items: center; justify-content: flex-end;
  padding-right: 4px;
}
.lefttabs { margin-top: auto; padding: 0 0 1px 4px; display: flex; align-items: stretch; height: 25px; }
.ltab { width: 59px; line-height: 24px; text-align: center; color: #222; }
.ltab + .ltab { margin-left: 6px; }
.ltab.active { border: 1px solid #ccc; border-top: 0; }

.center { width: 652px; flex: none; display: flex; flex-direction: column; }
.doctabs { height: 25px; flex: none; padding: 1px 0 0 1px; }
.doctab {
  width: 91px; height: 24px; background: #c4c4c4;
  display: flex; align-items: center; gap: 6px; padding-left: 7px;
  color: #222; font-size: 12px;
}
.doctab svg:last-child { margin-left: 2px; }

.canvasgrid {
  height: 607px; flex: none;
  display: grid;
  grid-template-columns: 18px 617px 17px;
  grid-template-rows: 18px 572px 17px;
}
.corner { background: #eee; border: 1px solid #ccc; border-width: 0 1px 1px 1px; }
.hruler {
  display: flex; overflow: hidden;
  padding-left: 13px;
  border-bottom: 1px solid #ccc;
  border-top: 1px solid #ddd;
}
.hruler span {
  flex: none; width: 37.700px;
  border-left: 1px solid #ccc;
  font: 10px/14px "Liberation Sans", sans-serif;
  letter-spacing: .3px;
  color: #666;
  padding-left: 1px;
  background: linear-gradient(#ccc, #ccc) 50% 100% / 1px 5px no-repeat;
}
.vruler {
  display: flex; flex-direction: column; overflow: hidden;
  padding-top: 1px;
  border: 1px solid #ccc;
  border-width: 0 1px 0 1px;
}
.vruler span {
  flex: none; height: 37.700px;
  border-bottom: 1px solid #ccc;
  font: 10px/14px "Liberation Sans", sans-serif;
  letter-spacing: .3px;
  color: #666;
  writing-mode: vertical-rl;
  transform: rotate(180deg);
  text-align: right;
  padding-bottom: 2px;
  background: linear-gradient(#ccc, #ccc) 0% 50% / 6px 1px no-repeat;
}
.paper { background: #fff; }
.vscroll { background: #eee; grid-row: 1 / 3; grid-column: 3; display: flex; flex-direction: column; }
.sbtn { width: 17px; height: 18px; background: #fff; border: 1px solid #bbb; flex: none; display: flex; align-items: center; justify-content: center; }
.sbtn.end { margin-top: auto; }
.vthumb { width: 17px; height: 275px; margin-top: 136px; background: #fff; border: 1px solid #bbb; flex: none; }
.hscroll { grid-column: 1 / 4; background: #eee; display: flex; padding-left: 1px; padding-right: 17px; }
.hscroll .sbtn { height: 17px; }
.hscroll .end { margin-top: 0; margin-left: auto; }
.hthumb { width: 199px; margin-left: 198px; background: #fff; border: 1px solid #bbb; flex: none; }
.tri-l, .tri-r { display: block; width: 0; height: 0; border-top: 6px solid transparent; border-bottom: 6px solid transparent; }
.tri-l { border-right: 6px solid #777; }
.tri-r { border-left: 6px solid #777; }

.pagebar { height: 21px; flex: none; display: flex; align-items: center; padding-left: 4px; }
.chev { flex: none; }
.pagesel {
  width: 123px; height: 14px; margin-left: 8px;
  border-left: 1px solid #999; border-right: 1px solid #999;
  display: flex; align-items: center; justify-content: space-between;
  padding: 0 6px 0 2px; line-height: 14px; color: #222;
  margin-right: 8px;
}
.pagetab { width: 54px; margin-left: 8px; border-left: 1px solid #ccc; color: #f7a13d; font-weight: 700; font-size: 12.500px; text-align: center; line-height: 14px; }
.swatchrow { height: 15px; flex: none; display: flex; align-items: flex-end; padding-left: 1px; }
.fillname { width: 26px; line-height: 14px; color: #222; }
.swatches { display: flex; gap: 1px; height: 13px; margin-bottom: 1px; }
.swatches i { display: block; width: 5px; height: 13px; }

.rightpanel { flex: 1; display: flex; flex-direction: column; }
.rhead { padding: 0 9px 0 10px; }
.rightbody { flex: 1; display: flex; }
.iconcol { width: 36px; padding-left: 4px; border-right: 1px solid #ddd; display: flex; flex-direction: column; gap: 10px; }
.sideicon { width: 30px; height: 30px; display: flex; align-items: center; justify-content: center; }
.sideicon.on { background: #bdbdbd; }
.fillbox {
  width: 289px; height: 170px; margin: 6px 0 0 6px;
  border: 1px solid #eee;
  padding: 5px 0 0 8px;
  display: flex; flex-direction: column;
}
.fillopt { height: 26px; display: flex; align-items: center; gap: 5px; color: #999; }
.radio { width: 12px; height: 12px; border: 1px solid #eee; border-radius: 50%; display: flex; align-items: center; justify-content: center; }
.radio.on::after { content: ""; width: 4px; height: 4px; border-radius: 50%; background: #bbb; }

/* status */
.status {
  flex: 1; background: #4d4d4d; color: #eee;
  display: flex; align-items: center;
  padding-left: 13px;
  font-size: 13px;
}
.stlink { color: #eee; text-decoration: underline; font: 13.400px "Liberation Sans", sans-serif; }
.stpage { margin-left: 8px; font-size: 13px; }
.sttools {
  margin-left: auto;
  height: 100%;
  display: grid;
  grid-template-columns: 19px 20px 16px 22px 93px 16px 48px 2px 30px 8px 30px 8px 28px;
  justify-items: center; align-items: center;
}
.stactive { width: 18px; height: 18px; background: #bdbdbd; display: flex; align-items: center; justify-content: center; }
.slider { width: 89px; height: 3px; background: #bbb; position: relative; }
.slider i { position: absolute; left: 19px; top: -5px; width: 6px; height: 13px; background: #eee; border: 1px solid #aaa; }
.zoomval { font: 13px "Liberation Sans", sans-serif; color: #e8e8e8; }
.grip { align-self: end; justify-self: end; margin: 0 0 1px 0; }

/* watermark */
.watermark {
  position: absolute; left: 434px; top: 146px;
  display: flex; gap: 10px;
  z-index: 3;
  pointer-events: none;
}
.wmtext { width: 190px; }
.wmbig {
  font: 700 56px/44px "Liberation Sans", sans-serif;
  height: 46px;
  display: flex;
  white-space: nowrap;
  -webkit-text-stroke: 2.500px currentColor;
}
.wmbig .g {
  color: #0b9444;
  width: 76px;
  flex: none;
  letter-spacing: 11px;
  transform: scaleX(.79);
  transform-origin: 0 0;
}
.wmbig .b { color: #0ea0e6; letter-spacing: 9px; }
.wmurl {
  font: 22px/22px "Liberation Sans", sans-serif;
  color: #666;
  letter-spacing: 1.550px;
  -webkit-text-stroke: .4px #666;
  white-space: nowrap;
  margin-top: 3px;
}
```
